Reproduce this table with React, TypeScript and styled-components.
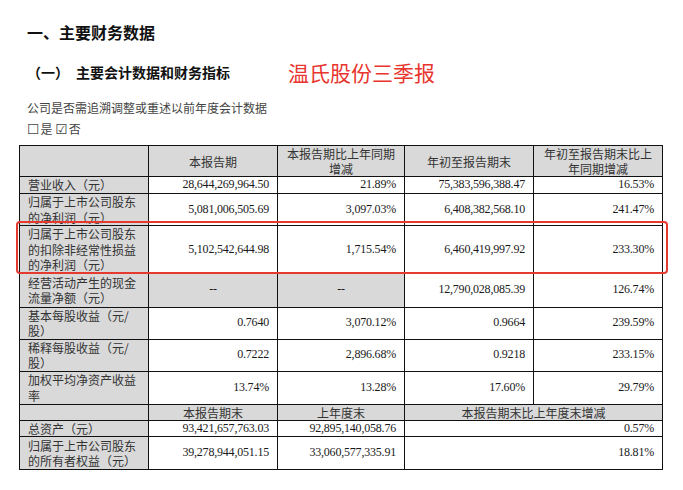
import React from "react";
import styled, { createGlobalStyle } from "styled-components";

const Global = createGlobalStyle`
  html, body { margin: 0; padding: 0; background: #ffffff; }
  body { font-family: "Liberation Serif", "Noto Sans CJK SC", serif; color: #1a1a1a; }
`;

const Page = styled.div`
  width: 683px;
  height: 490px;
  padding: 22px 0 0 19px;
  box-sizing: border-box;
  display: flex;
  flex-direction: column;
`;

const Title = styled.h1`
  margin: 0 0 0 8px;
  font-family: "Noto Sans CJK SC", sans-serif;
  font-size: 16px;
  line-height: 20px;
  font-weight: 700;
  color: #111;
`;

const SubRow = styled.div`
  display: flex;
  align-items: center;
  margin: 16px 0 0 8px;
  height: 28px;
`;

const SubTitle = styled.h2`
  margin: 0;
  font-family: "Noto Sans CJK SC", sans-serif;
  font-size: 14px;
  font-weight: 700;
  color: #111;
  display: flex;
  gap: 7px;
`;

const Stamp = styled.span`
  margin-left: 58px;
  font-family: "Noto Sans CJK SC", sans-serif;
  font-size: 21px;
  line-height: 28px;
  color: #e8352e;
`;

const Note = styled.p<{ $top: number }>`
  margin: ${(p) => p.$top}px 0 0 8px;
  font-family: "Noto Sans CJK SC", sans-serif;
  font-size: 12px;
  line-height: 18px;
  color: #444;
`;

const Box = styled.span`
  font-family: "DejaVu Sans", sans-serif;
  font-size: 14px;
  line-height: 18px;
  margin-right: 1px;
  vertical-align: top;
`;

const TableWrap = styled.div`
  position: relative;
  margin-top: 7px;
  width: 643px;
`;

const Table = styled.table`
  border-collapse: collapse;
  table-layout: fixed;
  width: 643px;
  font-size: 12px;
  line-height: 15.5px;
  color: #1a1a1a;
`;

const Row = styled.tr<{ $h: number }>`
  height: ${(p) => p.$h}px;
`;

const Cell = styled.td<{ $gray?: boolean; $align?: "left" | "center" | "right" }>`
  border: 1px solid #111;
  padding: 0 8px;
  vertical-align: middle;
  text-align: ${(p) => p.$align ?? "right"};
  background: ${(p) => (p.$gray ? "#d9d9d9" : "#fff")};
  font-family: "Liberation Serif", "Noto Sans CJK SC", serif;
  letter-spacing: -0.2px;
  overflow: hidden;
  white-space: normal;
`;

const Label = styled(Cell).attrs({ $gray: true, $align: "left" as const })`
  font-family: "Noto Sans CJK SC", sans-serif;
  letter-spacing: 0;
  color: #333;
`;

const Head = styled(Cell).attrs({ $gray: true, $align: "center" as const })`
  font-family: "Noto Sans CJK SC", sans-serif;
  letter-spacing: 0;
  color: #333;
  line-height: 15px;
`;

const Highlight = styled.div`
  position: absolute;
  left: -3px;
  top: 76px;
  width: 652px;
  height: 53px;
  border: 2.5px solid #e53a30;
  border-radius: 4px;
  box-sizing: border-box;
  pointer-events: none;
`;

type DataRow = { h: number; label: React.ReactNode; v: string[]; grayDash?: boolean };

const rows: DataRow[] = [
  { h: 17, label: "营业收入（元）", v: ["28,644,269,964.50", "21.89%", "75,383,596,388.47", "16.53%"] },
  { h: 32, label: <>归属于上市公司股东<br />的净利润（元）</>, v: ["5,081,006,505.69", "3,097.03%", "6,408,382,568.10", "241.47%"] },
  { h: 47, label: <>归属于上市公司股东<br />的扣除非经常性损益<br />的净利润（元）</>, v: ["5,102,542,644.98", "1,715.54%", "6,460,419,997.92", "233.30%"] },
  { h: 34, label: <>经营活动产生的现金<br />流量净额（元）</>, v: ["--", "--", "12,790,028,085.39", "126.74%"], grayDash: true },
  { h: 32, label: <>基本每股收益（元/<br />股）</>, v: ["0.7640", "3,070.12%", "0.9664", "239.59%"] },
  { h: 32, label: <>稀释每股收益（元/<br />股）</>, v: ["0.7222", "2,896.68%", "0.9218", "233.15%"] },
  { h: 33, label: <>加权平均净资产收益<br />率</>, v: ["13.74%", "13.28%", "17.60%", "29.79%"] },
];

export default function App() {
  return (
    <>
      <Global />
      <Page>
        <Title>一、主要财务数据</Title>
        <SubRow>
          <SubTitle>
            <span>（一）</span>
            <span>主要会计数据和财务指标</span>
          </SubTitle>
          <Stamp>温氏股份三季报</Stamp>
        </SubRow>
        <Note $top={13}>公司是否需追溯调整或重述以前年度会计数据</Note>
        <Note $top={3}>
          <Box>☐</Box>是&nbsp;<Box>☑</Box>否
        </Note>
        <TableWrap>
          <Table>
            <colgroup>
              <col style={{ width: 129 }} />
              <col style={{ width: 129 }} />
              <col style={{ width: 127 }} />
              <col style={{ width: 129 }} />
              <col style={{ width: 129 }} />
            </colgroup>
            <tbody>
              <Row $h={31}>
                <Head />
                <Head>本报告期</Head>
                <Head>本报告期比上年同期<br />增减</Head>
                <Head>年初至报告期末</Head>
                <Head>年初至报告期末比上<br />年同期增减</Head>
              </Row>
              {rows.map((r, i) => (
                <Row $h={r.h} key={i}>
                  <Label>{r.label}</Label>
                  {r.v.map((val, j) =>
                    r.grayDash && j < 2 ? (
                      <Cell key={j} $gray $align="center">{val}</Cell>
                    ) : (
                      <Cell key={j}>{val}</Cell>
                    )
                  )}
                </Row>
              ))}
              <Row $h={16}>
                <Head />
                <Head>本报告期末</Head>
                <Head>上年度末</Head>
                <Head colSpan={2}>本报告期末比上年度末增减</Head>
              </Row>
              <Row $h={16}>
                <Label>总资产（元）</Label>
                <Cell>93,421,657,763.03</Cell>
                <Cell>92,895,140,058.76</Cell>
                <Cell colSpan={2}>0.57%</Cell>
              </Row>
              <Row $h={33}>
                <Label>归属于上市公司股东<br />的所有者权益（元）</Label>
                <Cell>39,278,944,051.15</Cell>
                <Cell>33,060,577,335.91</Cell>
                <Cell colSpan={2}>18.81%</Cell>
              </Row>
            </tbody>
          </Table>
          <Highlight />
        </TableWrap>
      </Page>
    </>
  );
}
